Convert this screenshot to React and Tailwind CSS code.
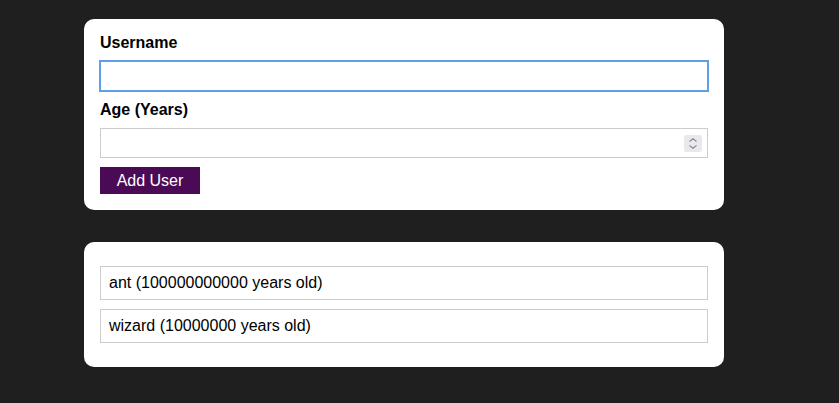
import React, { useState } from "react";

const users = [
  { id: "u1", name: "ant", age: "100000000000" },
  { id: "u2", name: "wizard", age: "10000000" },
];

const Card = ({ className, children }) => (
  <div className={"bg-white rounded-[10px] w-[640px] " + className}>{children}</div>
);

const App = () => {
  const [username, setUsername] = useState("");
  const [age, setAge] = useState("");

  return (
    <div
      className="min-h-screen bg-[#1f1f1f] pl-[84px] pt-[19px] pb-8 text-black text-[16px]"
      style={{ fontFamily: '"Liberation Sans", Arial, sans-serif' }}
    >
      <Card className="px-4 pt-[15px] pb-4">
        <form onSubmit={(e) => e.preventDefault()}>
          <label htmlFor="username" className="block font-bold leading-[18px] mb-[9px]">
            Username
          </label>
          <input
            id="username"
            type="text"
            value={username}
            onChange={(e) => setUsername(e.target.value)}
            className="block w-full h-[30px] border border-[#ccc] px-1 outline-2 outline-solid outline-[#5f9ee8] -outline-offset-1"
          />
          <label htmlFor="age" className="block font-bold leading-[18px] mt-[10px] mb-[9px]">
            Age (Years)
          </label>
          <div className="relative">
            <input
              id="age"
              type="text"
              value={age}
              onChange={(e) => setAge(e.target.value)}
              className="block w-full h-[30px] border border-[#ccc] px-1 outline-none"
            />
            <div className="absolute right-[6px] top-[7px] w-[18px] h-[17px] bg-[#e9e9ed] rounded-[2px] flex flex-col items-center justify-center gap-[3px]">
              <svg width="8" height="4" viewBox="0 0 8 4">
                <path d="M0.5 3.5 L4 0.8 L7.5 3.5" fill="none" stroke="#8a8a8e" strokeWidth="1.1" />
              </svg>
              <svg width="8" height="4" viewBox="0 0 8 4">
                <path d="M0.5 0.5 L4 3.2 L7.5 0.5" fill="none" stroke="#8a8a8e" strokeWidth="1.1" />
              </svg>
            </div>
          </div>
          <button
            type="submit"
            className="mt-[9px] h-[27px] w-[100px] bg-[#4a0a55] text-white leading-[27px]"
          >
            Add User
          </button>
        </form>
      </Card>

      <Card className="mt-8 px-4 py-6">
        <ul className="flex flex-col gap-[9px]">
          {users.map((u) => (
            <li
              key={u.id}
              className="h-[34px] border border-[#ccc] px-2 flex items-center"
            >
              {u.name} ({u.age} years old)
            </li>
          ))}
        </ul>
      </Card>
    </div>
  );
};

export default App;
